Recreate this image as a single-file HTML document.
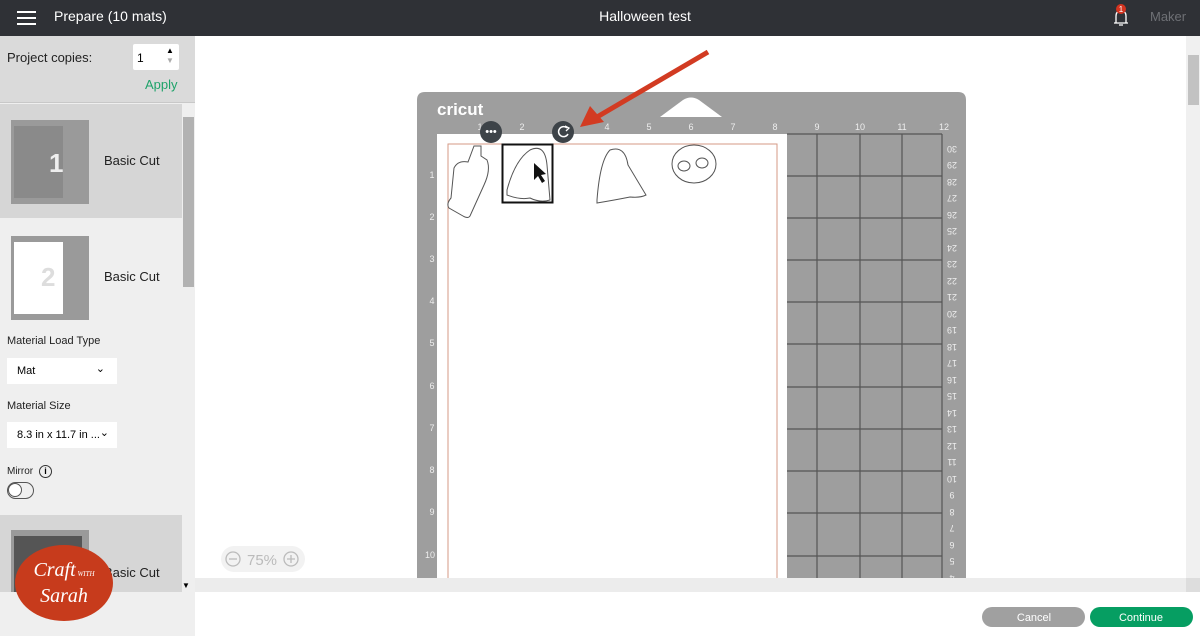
<!DOCTYPE html>
<html><head><style>
*{margin:0;padding:0;box-sizing:border-box}
body{width:1200px;height:636px;overflow:hidden;font-family:"Liberation Sans",sans-serif;background:#fff;position:relative}
.hdr{position:absolute;left:0;top:0;width:1200px;height:36px;background:#2f3136;color:#fff}
.side{position:absolute;left:0;top:36px;width:195px;height:600px;background:#efefef}
.abs{position:absolute}
</style></head><body>
<div class="hdr">
 <div class="abs" style="left:17px;top:11px;width:19px;height:2px;background:#fff;box-shadow:0 6px 0 #fff,0 12px 0 #fff"></div>
 <div class="abs" style="left:54px;top:8px;font-size:14px">Prepare (10 mats)</div>
 <div class="abs" style="left:0;width:1290px;top:8px;text-align:center;font-size:14px">Halloween test</div>
 <svg class="abs" style="left:1110px;top:3px" width="22" height="26" viewBox="0 0 22 26"><path d="M6 20 L6 13 Q6 8 11 8 Q16 8 16 13 L16 20 Z M4 20 H18 M9 22 H13" fill="none" stroke="#fff" stroke-width="1.3"/><circle cx="11" cy="6" r="5" fill="#d4331f"/><text x="11" y="9" font-size="8" fill="#fff" text-anchor="middle" font-family="Liberation Sans">1</text></svg>
 <div class="abs" style="left:1150px;top:9px;font-size:13px;color:#6e7075">Maker</div>
</div>
<div class="side">
 <div class="abs" style="left:0;top:0;width:195px;height:67px;background:#dadada;border-bottom:1px solid #c8c8c8"></div>
 <div class="abs" style="left:7px;top:14px;font-size:13px;color:#222">Project copies:</div>
 <div class="abs" style="left:133px;top:8px;width:46px;height:26px;background:#fff;border-radius:2px;font-size:12px;padding:7px 0 0 4px">1</div>
 <div class="abs" style="left:166px;top:10px;font-size:8px">▲</div>
 <div class="abs" style="left:166px;top:20px;font-size:8px;color:#aaa">▼</div>
 <div class="abs" style="left:145px;top:41px;font-size:13px;color:#1fa36a">Apply</div>
 <div class="abs" style="left:0;top:68px;width:182px;height:114px;background:#d6d6d6"></div>
 <div class="abs" style="left:11px;top:84px;width:78px;height:84px;background:#9a9a9a"><div style="position:absolute;left:3px;top:6px;width:49px;height:72px;background:#8a8a8a"></div><div style="position:absolute;left:38px;top:28px;font-size:26px;color:#eee;font-weight:bold">1</div></div>
 <div class="abs" style="left:104px;top:117px;font-size:13px;color:#222">Basic Cut</div>
 <div class="abs" style="left:11px;top:200px;width:78px;height:84px;background:#9a9a9a"><div style="position:absolute;left:3px;top:6px;width:49px;height:72px;background:#fff"></div><div style="position:absolute;left:30px;top:26px;font-size:26px;color:#ddd;font-weight:bold">2</div></div>
 <div class="abs" style="left:104px;top:233px;font-size:13px;color:#222">Basic Cut</div>
 <div class="abs" style="left:182px;top:68px;width:13px;height:488px;background:#efefef"></div>
 <div class="abs" style="left:183px;top:81px;width:11px;height:170px;background:#b2b2b2"></div>
 <div class="abs" style="left:7px;top:299px;font-size:11px;color:#222">Material Load Type</div>
 <div class="abs" style="left:7px;top:322px;width:110px;height:26px;background:#fff;font-size:11px;padding:7px 0 0 10px">Mat<span style="position:absolute;right:12px;top:4px;font-size:11px">⌄</span></div>
 <div class="abs" style="left:7px;top:364px;font-size:11px;color:#222">Material Size</div>
 <div class="abs" style="left:7px;top:386px;width:110px;height:26px;background:#fff;font-size:11px;padding:7px 0 0 10px">8.3 in x 11.7 in ...<span style="position:absolute;right:8px;top:4px">⌄</span></div>
 <div class="abs" style="left:7px;top:430px;font-size:10px;color:#222">Mirror</div>
 <div class="abs" style="left:39px;top:429px;width:13px;height:13px;border:1.5px solid #333;border-radius:50%;font-size:9px;text-align:center;line-height:10px;font-weight:bold">i</div>
 <div class="abs" style="left:7px;top:446px;width:27px;height:17px;border:1.5px solid #555;border-radius:9px"><div style="position:absolute;left:0;top:0;width:14px;height:14px;border:1.5px solid #555;border-radius:50%;background:#fff"></div></div>
 <div class="abs" style="left:0;top:479px;width:182px;height:77px;background:#d6d6d6"></div>
 <div class="abs" style="left:11px;top:494px;width:78px;height:62px;background:#9a9a9a"><div style="position:absolute;left:3px;top:6px;width:68px;height:56px;background:#555"></div></div>
 <div class="abs" style="left:104px;top:529px;font-size:13px;color:#222">Basic Cut</div>
 <div class="abs" style="left:182px;top:545px;font-size:8px">▼</div>
 <div class="abs" style="left:0;top:556px;width:195px;height:44px;background:#efefef"></div>
 <div class="abs" style="left:15px;top:509px;width:98px;height:76px;border-radius:50%;background:#c73b1c;color:#fff;font-family:'Liberation Serif',serif;font-style:italic;text-align:center;font-size:20px;line-height:22px;padding-top:14px">Craft<span style="font-size:7px"> WITH</span><br>Sarah</div>
</div>
<div class="abs" style="left:1186px;top:36px;width:14px;height:542px;background:#f0f0f0"></div>
<div class="abs" style="left:1188px;top:55px;width:11px;height:50px;background:#c2c2c2"></div>
<svg class="abs" style="left:0;top:0" width="1200" height="636">
 <path d="M417 100 Q417 92 425 92 H958 Q966 92 966 100 V578 H417 Z" fill="#9e9e9e"/>
 <path d="M660 117 L683 100 Q691 95 699 100 L722 117 Z" fill="#fff"/>
 <text x="437" y="115" font-size="17" font-weight="bold" fill="#fff" font-family="Liberation Sans">cricut</text>
 <rect x="437" y="134" width="350" height="444" fill="#fff"/>
 <path d="M448 578 V144 H777 V578" fill="none" stroke="#d49a86" stroke-width="1"/>
 <g stroke="#555" stroke-width="1.2">
  <line x1="817" y1="134" x2="817" y2="578"/><line x1="860" y1="134" x2="860" y2="578"/><line x1="902" y1="134" x2="902" y2="578"/><line x1="942" y1="134" x2="942" y2="578"/><line x1="787" y1="134" x2="942" y2="134"/>
  <line x1="787" y1="176" x2="942" y2="176"/><line x1="787" y1="218" x2="942" y2="218"/><line x1="787" y1="260" x2="942" y2="260"/><line x1="787" y1="302" x2="942" y2="302"/><line x1="787" y1="344" x2="942" y2="344"/><line x1="787" y1="387" x2="942" y2="387"/><line x1="787" y1="429" x2="942" y2="429"/><line x1="787" y1="471" x2="942" y2="471"/><line x1="787" y1="513" x2="942" y2="513"/><line x1="787" y1="556" x2="942" y2="556"/>
 </g>
 <g font-size="9" fill="#eee" font-family="Liberation Sans" text-anchor="middle">
  <text x="480" y="130">1</text><text x="522" y="130">2</text><text x="564" y="130">3</text><text x="607" y="130">4</text><text x="649" y="130">5</text><text x="691" y="130">6</text><text x="733" y="130">7</text><text x="775" y="130">8</text><text x="817" y="130">9</text><text x="860" y="130">10</text><text x="902" y="130">11</text><text x="944" y="130">12</text>
  <text x="432" y="178">1</text><text x="432" y="220">2</text><text x="432" y="262">3</text><text x="432" y="304">4</text><text x="432" y="346">5</text><text x="432" y="389">6</text><text x="432" y="431">7</text><text x="432" y="473">8</text><text x="432" y="515">9</text><text x="430" y="558">10</text>
 </g>
 <g font-size="9" fill="#eee" font-family="Liberation Sans" text-anchor="middle">
  <text x="952" y="140" transform="rotate(180 952 143)">30</text>
  <text x="952" y="156" transform="rotate(180 952 159)">29</text>
  <text x="952" y="173" transform="rotate(180 952 176)">28</text>
  <text x="952" y="189" transform="rotate(180 952 192)">27</text>
  <text x="952" y="206" transform="rotate(180 952 209)">26</text>
  <text x="952" y="222" transform="rotate(180 952 225)">25</text>
  <text x="952" y="239" transform="rotate(180 952 242)">24</text>
  <text x="952" y="255" transform="rotate(180 952 258)">23</text>
  <text x="952" y="272" transform="rotate(180 952 275)">22</text>
  <text x="952" y="288" transform="rotate(180 952 291)">21</text>
  <text x="952" y="305" transform="rotate(180 952 308)">20</text>
  <text x="952" y="321" transform="rotate(180 952 324)">19</text>
  <text x="952" y="338" transform="rotate(180 952 341)">18</text>
  <text x="952" y="354" transform="rotate(180 952 357)">17</text>
  <text x="952" y="371" transform="rotate(180 952 374)">16</text>
  <text x="952" y="387" transform="rotate(180 952 390)">15</text>
  <text x="952" y="404" transform="rotate(180 952 407)">14</text>
  <text x="952" y="420" transform="rotate(180 952 423)">13</text>
  <text x="952" y="437" transform="rotate(180 952 440)">12</text>
  <text x="952" y="453" transform="rotate(180 952 456)">11</text>
  <text x="952" y="470" transform="rotate(180 952 473)">10</text>
  <text x="952" y="486" transform="rotate(180 952 489)">9</text>
  <text x="952" y="503" transform="rotate(180 952 506)">8</text>
  <text x="952" y="519" transform="rotate(180 952 522)">7</text>
  <text x="952" y="536" transform="rotate(180 952 539)">6</text>
  <text x="952" y="552" transform="rotate(180 952 555)">5</text>
  <text x="952" y="569" transform="rotate(180 952 572)">4</text>
 </g>
 <g fill="none" stroke="#555" stroke-width="1">
  <path d="M474 146 L481 146 L481 156 L487 160 Q491 170 484 185 L470 216 Q468 219 463 216 L449 208 Q446 204 451 198 L454 168 Q458 160 468 162 Z"/>
  <path d="M507 190 Q515 160 530 150 Q545 143 547 165 L550 200 Q540 203 530 198 Q520 200 507 195 Z"/>
  <path d="M597 200 Q600 160 610 150 Q625 145 628 165 L646 195 Q640 198 630 197 Q615 200 597 203 Z"/>
  <ellipse cx="694" cy="164" rx="22" ry="19"/><ellipse cx="684" cy="166" rx="6" ry="5"/><ellipse cx="702" cy="163" rx="6" ry="5"/>
 </g>
 <rect x="502.5" y="144.5" width="50" height="58" fill="none" stroke="#111" stroke-width="2"/>
 <path d="M534 163 L534 180 L538 176 L542 183 L545 181 L541 175 L546 174 Z" fill="#111"/>
 <circle cx="491" cy="132" r="11" fill="#3d4348"/><text x="491" y="135" font-size="11" fill="#fff" text-anchor="middle" font-family="Liberation Sans">•••</text>
 <circle cx="563" cy="132" r="11" fill="#3d4348"/><path d="M567 128 A5 5 0 1 0 568 134" fill="none" stroke="#fff" stroke-width="1.5"/><path d="M565 126 L569 128 L566 131" fill="none" stroke="#fff" stroke-width="1.3"/>
 <line x1="708" y1="52" x2="597" y2="117" stroke="#d23b22" stroke-width="5"/>
 <path d="M580 127 L590 106 L604 122 Z" fill="#d23b22"/>
 <rect x="195" y="578" width="991" height="14" fill="#ececec"/>
 <rect x="1186" y="578" width="14" height="14" fill="#ddd"/>
 <rect x="221" y="546" width="84" height="26" rx="13" fill="#f2f2f2"/>
 <circle cx="233" cy="559" r="7" fill="none" stroke="#bbb" stroke-width="1.3"/><line x1="229" y1="559" x2="237" y2="559" stroke="#bbb" stroke-width="1.3"/>
 <text x="262" y="565" font-size="15" fill="#bbb" text-anchor="middle" font-family="Liberation Sans">75%</text>
 <circle cx="291" cy="559" r="7" fill="none" stroke="#bbb" stroke-width="1.3"/><path d="M287 559 H295 M291 555 V563" stroke="#bbb" stroke-width="1.3"/>
 <rect x="982" y="607" width="103" height="20" rx="10" fill="#a0a0a0"/>
 <text x="1034" y="621" font-size="11" fill="#fff" text-anchor="middle" font-family="Liberation Sans">Cancel</text>
 <rect x="1090" y="607" width="103" height="20" rx="10" fill="#069e62"/>
 <text x="1141" y="621" font-size="11" fill="#fff" text-anchor="middle" font-family="Liberation Sans">Continue</text>
</svg>
</body></html>
